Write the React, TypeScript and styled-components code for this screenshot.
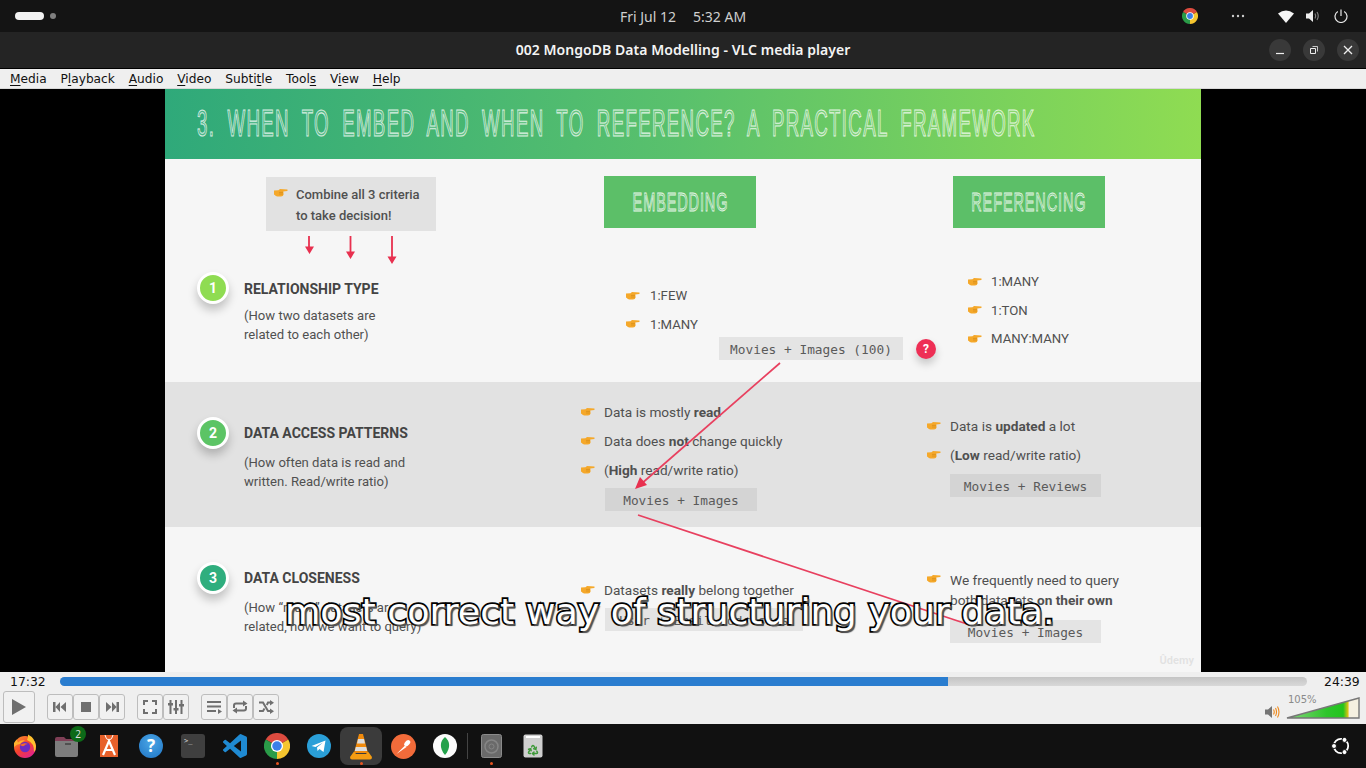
import React from "react";
import styled, { createGlobalStyle } from "styled-components";
import { Recycle } from "lucide-react";

const Global = createGlobalStyle`
  html, body { margin: 0; padding: 0; background: #000; }
  body { width: 1366px; height: 768px; overflow: hidden; font-family: "Liberation Sans", sans-serif; }
`;
const Desktop = styled.div`width:1366px;height:768px;display:flex;flex-direction:column;overflow:hidden;`;

/* Top bar */
const TopBar = styled.header`height:32px;background:#141414;display:flex;align-items:center;position:relative;padding:0 0 0 15px;box-sizing:border-box;flex:none;`;
const WorkspacePill = styled.span`width:29px;height:8px;border-radius:4px;background:#f2f2f2;`;
const WorkspaceDot = styled.span`width:6px;height:6px;border-radius:50%;background:#808080;margin-left:6px;`;
const Clock = styled.div`position:absolute;left:620px;top:0;height:32px;display:flex;align-items:center;gap:17px;color:#cfcfcf;font:14px "Noto Sans",sans-serif;`;
const Tray = styled.div`margin-left:auto;display:flex;align-items:center;height:32px;`;
const TraySlot = styled.span<{ $w: number }>`width:${p => p.$w}px;display:flex;justify-content:center;align-items:center;`;

/* Title bar */
const TitleBar = styled.div`height:36px;background:#242424;border-bottom:1px solid #000;display:flex;align-items:center;justify-content:flex-end;padding-right:7px;gap:12px;position:relative;flex:none;`;
const WindowTitle = styled.div`position:absolute;left:0;right:0;top:0;height:36px;text-align:center;color:#f4f4f4;font:600 14px/36px "Noto Sans",sans-serif;letter-spacing:.05px;`;
const WindowBtn = styled.button`width:22px;height:22px;border-radius:50%;border:0;background:#393939;padding:0;display:flex;align-items:center;justify-content:center;`;

/* Menu */
const MenuBar = styled.nav`height:20px;background:#efefef;border-bottom:1px solid #d8d8d8;box-sizing:border-box;display:flex;align-items:center;padding-left:10px;gap:13.85px;font:12.2px "DejaVu Sans",sans-serif;color:#111;flex:none;`;
const MenuItem = styled.span`white-space:nowrap;u{text-underline-offset:2px;}`;

/* Video */
const VideoArea = styled.main`height:583px;background:#000;display:flex;justify-content:center;flex:none;position:relative;`;
const Slide = styled.div`width:1036px;height:583px;position:relative;background:#f6f6f6;display:flex;flex-direction:column;overflow:hidden;color:#505050;font:13.1px/20px Roboto,sans-serif;`;
const SlideHeader = styled.div`height:70px;background:linear-gradient(90deg,#2fa97a 0%,#5ac16c 50%,#8fdc52 100%);display:flex;align-items:center;padding-left:32px;flex:none;`;
const SlideTitle = styled.h1`margin:0;font:400 36px "Liberation Sans Narrow","Liberation Sans",sans-serif;color:rgba(255,255,255,.12);-webkit-text-stroke:1.1px rgba(255,255,255,.8);white-space:nowrap;transform:scaleX(.52);transform-origin:left center;letter-spacing:2.5px;word-spacing:11px;`;
const Section = styled.section<{ $h: number; $alt?: boolean }>`height:${p => p.$h}px;background:${p => (p.$alt ? "#e2e2e2" : "#f6f6f6")};display:grid;grid-template-columns:415px 345px 276px;flex:none;`;
const Col = styled.div<{ $top?: number }>`padding-top:${p => p.$top ?? 0}px;display:flex;flex-direction:column;align-items:flex-start;min-width:0;`;
const Callout = styled.div`margin:18px 0 0 101px;width:170px;height:54px;background:#e2e2e2;box-sizing:border-box;padding:7px 0 0 8px;display:flex;gap:8px;font:500 13px/21px Roboto,sans-serif;`;
const CalloutHand = styled.span`margin-top:4px;line-height:0;`;
const CriteriaArrows = styled.svg`margin:5px 0 8px 140px;display:block;flex:none;`;
const Step = styled.div`display:flex;gap:15px;margin-left:32px;`;
const Badge = styled.div<{ $c: string }>`width:32px;height:32px;box-sizing:border-box;border-radius:50%;background:${p => p.$c};border:3px solid #fff;box-shadow:0 6px 10px rgba(0,0,0,.22);color:#fff;display:flex;align-items:center;justify-content:center;font:700 14px Roboto,sans-serif;flex:none;`;
const StepText = styled.div<{ $pad: number }>`padding-top:${p => p.$pad}px;`;
const StepTitle = styled.div`font:700 14px/20px Roboto,sans-serif;color:#444;`;
const StepDesc = styled.div<{ $gap: number }>`margin-top:${p => p.$gap}px;line-height:19.5px;white-space:nowrap;`;
const ColHeader = styled.div<{ $left: number }>`margin:17px 0 0 ${p => p.$left}px;width:152px;height:52px;background:#5cbf68;display:flex;align-items:center;justify-content:center;overflow:hidden;flex:none;`;
const ColHeaderText = styled.span`font:400 26px "Liberation Sans Narrow","Liberation Sans",sans-serif;color:rgba(255,255,255,.12);-webkit-text-stroke:.9px rgba(255,255,255,.85);transform:scaleX(.56);white-space:nowrap;letter-spacing:1.5px;`;
const Points = styled.ul<{ $left: number; $top?: number; $size?: number; $gap?: number }>`list-style:none;margin:${p => p.$top ?? 0}px 0 0 ${p => p.$left}px;padding:0;font-size:${p => p.$size ?? 13.65}px;--gap:${p => p.$gap ?? 9}px;`;
const Point = styled.li<{ $lh: number }>`display:flex;gap:var(--gap);line-height:${p => p.$lh}px;white-space:nowrap;`;
const PointHand = styled.span<{ $lh: number }>`flex:none;width:14px;line-height:0;margin-top:${p => (p.$lh - 9) / 2 - 1.25}px;`;
const CodeRow = styled.div<{ $left: number; $top: number }>`display:flex;align-items:center;gap:13px;margin:${p => p.$top}px 0 0 ${p => p.$left}px;`;
const CodeBox = styled.div<{ $w: number; $bg: string }>`width:${p => p.$w}px;height:23px;background:${p => p.$bg};font:12.8px/25px "DejaVu Sans Mono","Liberation Mono",monospace;color:#5a5a5a;text-align:center;white-space:nowrap;`;
const Question = styled.div`width:20px;height:20px;border-radius:50%;background:#ee2f55;color:#fff;font:700 12px/20px Roboto,sans-serif;text-align:center;box-shadow:0 5px 8px rgba(0,0,0,.2);`;
const Annotation = styled.svg`position:absolute;left:0;top:0;pointer-events:none;`;
const Watermark = styled.div`position:absolute;right:7px;bottom:5px;color:#e2e2e2;font:700 11px Roboto,sans-serif;text-shadow:0 0 1px #fff;`;
const Subtitle = styled.div`position:absolute;left:285px;top:503px;color:#fff;font:36.3px/40px "DejaVu Sans",sans-serif;-webkit-text-stroke:3.5px #000;paint-order:stroke fill;text-shadow:2px 2px 1px #555;white-space:nowrap;`;

/* Controls */
const Controls = styled.div`height:52px;background:#efefef;flex:none;display:flex;flex-direction:column;`;
const SeekRow = styled.div`height:18px;display:flex;align-items:center;font:12.4px "DejaVu Sans",sans-serif;color:#111;`;
const TimeText = styled.span<{ $w: number; $pad: number }>`width:${p => p.$w}px;padding-left:${p => p.$pad}px;box-sizing:border-box;flex:none;`;
const SeekTrack = styled.div`width:1247px;height:9px;border-radius:5px;background:linear-gradient(#c4c4c4,#d8d8d8);overflow:hidden;`;
const SeekFill = styled.div`height:100%;background:#2a7dcf;`;
const ButtonRow = styled.div`height:34px;display:flex;align-items:center;padding-left:3px;position:relative;`;
const PlayBtn = styled.button`width:32px;height:32px;box-sizing:border-box;border:1px solid #bdbdbd;border-radius:3px;background:#f1f1f1;padding:0;display:flex;align-items:center;justify-content:center;margin-right:12px;`;
const Ctl = styled.button<{ $end?: boolean }>`width:26px;height:26px;box-sizing:border-box;border:1px solid #bdbdbd;border-radius:3px;background:#f1f1f1;padding:0;display:flex;align-items:center;justify-content:center;margin-right:${p => (p.$end ? 12 : 0)}px;`;
const VolumeWrap = styled.div`margin-left:auto;margin-right:6px;display:flex;align-items:flex-end;gap:6px;position:relative;height:24px;`;
const VolumeLabel = styled.span`position:absolute;left:23px;top:-1px;font:10px "DejaVu Sans",sans-serif;color:#8a8a8a;`;

/* Dock */
const Dock = styled.footer`height:44px;background:#111;display:flex;align-items:center;padding-left:4px;flex:none;`;
const DockItem = styled.div<{ $active?: boolean; $running?: boolean }>`width:42px;height:38px;box-sizing:border-box;border-radius:8px;display:flex;align-items:center;justify-content:center;position:relative;background:${p => (p.$active ? "#3b3b3b" : "transparent")};
  ${p => p.$running ? `&::after{content:"";position:absolute;bottom:0;left:50%;width:3px;height:3px;margin-left:-1.5px;border-radius:50%;background:#e95420;}` : ""}`;
const DockSep = styled.span`width:1px;height:26px;background:#444;margin:0 2px 0 1px;`;
const Count = styled.span`position:absolute;right:2px;top:-1px;width:16px;height:16px;border-radius:50%;background:#0d6a18;color:#ddd;font:10px/16px "Noto Sans",sans-serif;text-align:center;`;
const HelpDisc = styled.div`width:24px;height:24px;border-radius:50%;background:radial-gradient(circle at 50% 35%,#4aa6e6,#1f74c4);color:#fff;font:700 17px/24px "Noto Sans",sans-serif;text-align:center;`;
const TermPrompt = styled.div`width:24px;height:24px;border-radius:3px;background:#3f3f3f;color:#ddd;font:7px/10px "DejaVu Sans Mono",monospace;padding:2px 0 0 3px;box-sizing:border-box;`;
const DockEnd = styled.div`margin-left:auto;width:50px;display:flex;justify-content:center;`;
const TrashMark = styled.span`position:absolute;left:15px;top:17px;line-height:0;`;

const Hand = () => (
  <svg width="14" height="9" viewBox="0 0 14 9"><path d="M0 2.6 4.5 2.2 6 .9 13.4 1.6Q14 2.4 13.2 2.9L9.3 3.4 9.6 6.6Q9.2 8.6 7 8.6H3.4Q1.6 8.6 .6 6.8H0Z" fill="#f5a82a" /><path d="M5 4.4H9M5 6H9" stroke="#d08614" strokeWidth=".6" /></svg>
);
const P: React.FC<{ lh?: number; children: React.ReactNode }> = ({ lh = 28.5, children }) => (
  <Point $lh={lh}><PointHand $lh={lh}><Hand /></PointHand><span>{children}</span></Point>
);

const Chrome: React.FC<{ s: number }> = ({ s }) => (
  <svg width={s} height={s} viewBox="0 0 24 24">
    <path d="M12 12 22.4 6A12 12 0 0 0 1.6 6Z" fill="#dd4b3f" />
    <path d="M12 12 1.6 6A12 12 0 0 0 12 24Z" fill="#2a9b48" />
    <path d="M12 12 12 24A12 12 0 0 0 22.4 6Z" fill="#f5c52e" />
    <circle cx="12" cy="12" r="5.6" fill="#fff" /><circle cx="12" cy="12" r="4.4" fill="#3b7fe8" />
  </svg>
);
const G = "#6f6f6f";
const I: React.FC<{ children: React.ReactNode; w?: number }> = ({ children, w = 18 }) => (
  <svg width={w} height="18" viewBox="0 0 18 18" fill={G} stroke="none">{children}</svg>
);

export default function App() {
  return (
    <Desktop>
      <Global />
      <TopBar>
        <WorkspacePill /><WorkspaceDot />
        <Clock><span>Fri Jul 12</span><span>5:32 AM</span></Clock>
        <Tray>
          <TraySlot $w={32}><Chrome s={16} /></TraySlot>
          <TraySlot $w={64}><svg width="14" height="4"><circle cx="2" cy="2" r="1.2" fill="#ccc" /><circle cx="7" cy="2" r="1.2" fill="#ccc" /><circle cx="12" cy="2" r="1.2" fill="#ccc" /></svg></TraySlot>
          <TraySlot $w={32}><svg width="16" height="13" viewBox="0 0 16 13"><path d="M0 3.5Q8-2.5 16 3.5L8 13Z" fill="#f4f4f4" /></svg></TraySlot>
          <TraySlot $w={22}><svg width="15" height="14" viewBox="0 0 15 14"><path d="M0 4.5H3L7 1V13L3 9.5H0Z" fill="#eee" /><path d="M9 4.5Q10.5 7 9 9.5M11 3Q13.5 7 11 11" stroke="#888" strokeWidth="1.1" fill="none" /></svg></TraySlot>
          <TraySlot $w={34}><svg width="14" height="14" viewBox="0 0 14 14" fill="none" stroke="#e8e8e8" strokeWidth="1.2"><path d="M7 .5V7" /><path d="M3.8 2.4A6 6 0 1 0 10.2 2.4" /></svg></TraySlot>
          <TraySlot $w={8} />
        </Tray>
      </TopBar>

      <TitleBar>
        <WindowTitle>002 MongoDB Data Modelling - VLC media player</WindowTitle>
        <WindowBtn><svg width="10" height="10"><path d="M1 8.5H9" stroke="#eee" strokeWidth="1.2" /></svg></WindowBtn>
        <WindowBtn><svg width="10" height="10" fill="none" stroke="#eee"><path d="M1.5 3.5H6.5V8.5H1.5Z" /><path d="M3.5 1.5H8.5V6.5" strokeWidth=".8" /></svg></WindowBtn>
        <WindowBtn><svg width="10" height="10" stroke="#eee" strokeWidth="1.3"><path d="M1 1 9 9M9 1 1 9" /></svg></WindowBtn>
      </TitleBar>

      <MenuBar>
        <MenuItem><u>M</u>edia</MenuItem>
        <MenuItem>P<u>l</u>ayback</MenuItem>
        <MenuItem><u>A</u>udio</MenuItem>
        <MenuItem><u>V</u>ideo</MenuItem>
        <MenuItem>Subti<u>t</u>le</MenuItem>
        <MenuItem>Tool<u>s</u></MenuItem>
        <MenuItem>V<u>i</u>ew</MenuItem>
        <MenuItem><u>H</u>elp</MenuItem>
      </MenuBar>

      <VideoArea>
        <Slide>
          <SlideHeader><SlideTitle>3. WHEN TO EMBED AND WHEN TO REFERENCE? A PRACTICAL FRAMEWORK</SlideTitle></SlideHeader>

          <Section $h={223}>
            <Col>
              <Callout><CalloutHand><Hand /></CalloutHand><span>Combine all 3 criteria<br />to take decision!</span></Callout>
              <CriteriaArrows width="92" height="28" viewBox="0 0 92 28">
                <g stroke="#e8304f" strokeWidth="1.8" fill="#e8304f">
                  <path d="M4 0V14" /><path d="M45.500 0V19" /><path d="M87 0V24" />
                  <path stroke="none" d="M0 10.500H9L4.500 18ZM41 15.500H50L45.500 23ZM82.500 20.500H91.500L87 28Z" />
                </g>
              </CriteriaArrows>
              <Step>
                <Badge $c="#8fdc52">1</Badge>
                <StepText $pad={7}>
                  <StepTitle>RELATIONSHIP TYPE</StepTitle>
                  <StepDesc $gap={6.5}>(How two datasets are<br />related to each other)</StepDesc>
                </StepText>
              </Step>
            </Col>
            <Col>
              <ColHeader $left={24}><ColHeaderText>EMBEDDING</ColHeaderText></ColHeader>
              <Points $left={46} $top={54} $size={13.2} $gap={10}><P>1:FEW</P><P>1:MANY</P></Points>
              <CodeRow $left={139} $top={-2}>
                <CodeBox $w={184} $bg="#e4e4e4">Movies + Images (100)</CodeBox>
                <Question>?</Question>
              </CodeRow>
            </Col>
            <Col>
              <ColHeader $left={28}><ColHeaderText>REFERENCING</ColHeaderText></ColHeader>
              <Points $left={43} $top={40} $size={13.2}><P>1:MANY</P><P>1:TON</P><P>MANY:MANY</P></Points>
            </Col>
          </Section>

          <Section $h={145} $alt>
            <Col $top={35}>
              <Step>
                <Badge $c="#5cc465">2</Badge>
                <StepText $pad={6}>
                  <StepTitle>DATA ACCESS PATTERNS</StepTitle>
                  <StepDesc $gap={9.5}>(How often data is read and<br />written. Read/write ratio)</StepDesc>
                </StepText>
              </Step>
            </Col>
            <Col $top={16}>
              <Points $left={1}>
                <P lh={29}>Data is mostly <b>read</b></P>
                <P lh={29}>Data does <b>not</b> change quickly</P>
                <P lh={29}>(<b>High</b> read/write ratio)</P>
              </Points>
              <CodeRow $left={25} $top={3}><CodeBox $w={152} $bg="#d4d4d4">Movies + Images</CodeBox></CodeRow>
            </Col>
            <Col $top={30}>
              <Points $left={2}>
                <P lh={29}>Data is <b>updated</b> a lot</P>
                <P lh={29}>(<b>Low</b> read/write ratio)</P>
              </Points>
              <CodeRow $left={25} $top={4}><CodeBox $w={151} $bg="#d4d4d4">Movies + Reviews</CodeBox></CodeRow>
            </Col>
          </Section>

          <Section $h={145}>
            <Col $top={35}>
              <Step>
                <Badge $c="#2fae7e">3</Badge>
                <StepText $pad={6}>
                  <StepTitle>DATA CLOSENESS</StepTitle>
                  <StepDesc $gap={9.5}>(How “much” datasets are<br />related, how we want to query)</StepDesc>
                </StepText>
              </Step>
            </Col>
            <Col $top={49}>
              <Points $left={1}><P>Datasets <b>really</b> belong together</P></Points>
              <CodeRow $left={25} $top={3.5}><CodeBox $w={198} $bg="#e4e4e4">User + Email addresses</CodeBox></CodeRow>
            </Col>
            <Col $top={43}>
              <Points $left={2}><P lh={20}>We frequently need to query<br />both datasets <b>on their own</b></P></Points>
              <CodeRow $left={25} $top={10}><CodeBox $w={151} $bg="#e4e4e4">Movies + Images</CodeBox></CodeRow>
            </Col>
          </Section>

          <Annotation width="1036" height="583" viewBox="0 0 1036 583">
            <path d="M615 274 475 396" stroke="#e8405f" strokeWidth="1.7" fill="none" />
            <path d="M470 400 482 396 475 388Z" fill="#e8304f" />
            <path d="M473 426 805 536" stroke="#e8405f" strokeWidth="1.7" fill="none" />
          </Annotation>
          <Watermark>Ûdemy</Watermark>
        </Slide>
        <Subtitle>most correct way of structuring your data.</Subtitle>
      </VideoArea>

      <Controls>
        <SeekRow>
          <TimeText $w={60} $pad={10}>17:32</TimeText>
          <SeekTrack><SeekFill style={{ width: `${(888 / 1247) * 100}%` }} /></SeekTrack>
          <TimeText $w={59} $pad={17}>24:39</TimeText>
        </SeekRow>
        <ButtonRow>
          <PlayBtn><svg width="18" height="20"><path d="M2 2 16 10 2 18Z" fill={G} /></svg></PlayBtn>
          <Ctl><I><path d="M2 4H4.5V14H2ZM9 4V14L4.5 9ZM15 4V14L9.5 9Z" /></I></Ctl>
          <Ctl><I><path d="M4 4H14V14H4Z" /></I></Ctl>
          <Ctl $end><I><path d="M13.5 4H16V14H13.5ZM9 4V14L13.5 9ZM3 4V14L8.5 9Z" /></I></Ctl>
          <Ctl><I><path d="M2 2H7V4H4V7H2ZM11 2H16V7H14V4H11ZM2 11H4V14H7V16H2ZM14 11H16V16H11V14H14Z" /></I></Ctl>
          <Ctl $end><I><path d="M2.5 2H4.5V5H6V7.5H4.5V16H2.5V7.5H1V5H2.5ZM8 2H10V10H11.5V12.5H10V16H8V12.5H6.5V10H8ZM13.5 2H15.5V6H17V8.5H15.5V16H13.5V8.5H12V6H13.5Z" /></I></Ctl>
          <Ctl><I><path d="M2 3H16V5H2ZM2 7.5H16V9.5H2ZM2 12H11V14H2ZM13 11 17 13.5 13 16Z" /></I></Ctl>
          <Ctl><svg width="18" height="18" viewBox="0 0 18 18" fill="none" stroke={G} strokeWidth="2"><path d="M3 10V7.5Q3 5.5 5 5.5H13" /><path d="M15 8V10.5Q15 12.5 13 12.5H5" /><path fill={G} stroke="none" d="M12 2.5 16.5 5.5 12 8.5ZM6 9.5 1.5 12.5 6 15.5Z" /></svg></Ctl>
          <Ctl><svg width="18" height="18" viewBox="0 0 18 18" fill="none" stroke={G} strokeWidth="2"><path d="M2 4.5H6L11 13H14" /><path d="M2 13H6L7.5 10.5M9.8 7 11 4.5H14" /><path fill={G} stroke="none" d="M13 2V7.5L17 4.7ZM13 10.5V16L17 13.2Z" /></svg></Ctl>
          <VolumeWrap>
            <svg width="15" height="14" viewBox="0 0 15 14"><path d="M0 4.5H3L7 1V13L3 9.5H0Z" fill="#757575" /><path d="M8.5 4.5Q10 7 8.5 9.5M10.5 3Q12.5 7 10.5 11M12.5 1.5Q15.5 7 12.5 12.5" stroke="#f08a1c" strokeWidth="1.1" fill="none" /></svg>
            <svg width="74" height="22" viewBox="0 0 74 22">
              <defs><linearGradient id="vol"><stop offset="0" stopColor="#86d77c" /><stop offset=".55" stopColor="#2ec52c" /><stop offset=".78" stopColor="#22c41c" /><stop offset=".85" stopColor="#e2c414" /><stop offset=".86" stopColor="#f5f0e0" /></linearGradient></defs>
              <path d="M1 21 73 1V21Z" fill="url(#vol)" stroke="#777" strokeWidth="1.4" />
            </svg>
            <VolumeLabel>105%</VolumeLabel>
          </VolumeWrap>
        </ButtonRow>
      </Controls>

      <Dock>
        <DockItem>
          <svg width="24" height="24" viewBox="0 0 24 24">
            <defs><linearGradient id="ff" x1="0" y1="0" x2=".7" y2="1"><stop offset="0" stopColor="#ff9a2c" /><stop offset=".55" stopColor="#f5412e" /><stop offset="1" stopColor="#e0228f" /></linearGradient></defs>
            <circle cx="12" cy="13" r="11" fill="url(#ff)" />
            <path d="M15 .5Q22 4 23 12 23 16 21 18 21.500 9 14 6 15.500 3.500 15 .5Z" fill="#ffc12e" />
            <path d="M1 9 3.500 5.500 5 8.500Q8 5.500 12 6.500 8 8 7 10 4 10 1 13Z" fill="#ffb02e" />
            <circle cx="12" cy="13" r="5.200" fill="#6b2bc2" />
            <path d="M7 11Q11 8 15 10 12 10 11 12 8.500 12.500 7 11Z" fill="#f06a2e" />
          </svg>
        </DockItem>
        <DockItem>
          <svg width="26" height="24" viewBox="0 0 26 24"><path d="M1 5Q1 3 3 3H10L12 5H21V12H1Z" fill="#7f3f56" /><path d="M1 7H24V21Q24 23 22 23H3Q1 23 1 21Z" fill="#7d7d7d" /><path d="M11 10H17" stroke="#333" strokeWidth="1.200" /></svg>
          <Count>2</Count>
        </DockItem>
        <DockItem>
          <svg width="20" height="24" viewBox="0 0 20 24"><path d="M1 1H19V23H1Z" fill="#e7602a" /><path d="M6 1Q7 6 10 6T14 1" stroke="#fff" strokeWidth="1" fill="none" /><path d="M4 21 10 7 16 21M6.500 16H13.500" stroke="#fff" strokeWidth="2.200" fill="none" /></svg>
        </DockItem>
        <DockItem><HelpDisc>?</HelpDisc></DockItem>
        <DockItem><TermPrompt>&gt;_</TermPrompt></DockItem>
        <DockItem>
          <svg width="24" height="24" viewBox="0 0 24 24"><path fill="#1f8ad2" d="M23.15 2.587L18.21.21a1.494 1.494 0 0 0-1.705.29l-9.46 8.63-4.12-3.128a.999.999 0 0 0-1.276.057L.327 7.261A1 1 0 0 0 .326 8.74L3.899 12 .326 15.26a1 1 0 0 0 .001 1.479L1.65 17.94a.999.999 0 0 0 1.276.057l4.12-3.128 9.46 8.63a1.492 1.492 0 0 0 1.704.29l4.942-2.377A1.5 1.5 0 0 0 24 20.06V3.939a1.5 1.5 0 0 0-.85-1.352zm-5.146 14.861L10.826 12l7.178-5.448v10.896z" /></svg>
        </DockItem>
        <DockItem $running><Chrome s={26} /></DockItem>
        <DockItem>
          <svg width="24" height="24" viewBox="0 0 24 24"><circle cx="12" cy="12" r="12" fill="#2a9fd8" /><path d="M4.500 12 18.500 6.500 16.500 18 12.500 15 10.500 17 10 13.500 16 8.500 8.500 13Z" fill="#fff" /></svg>
        </DockItem>
        <DockItem $active $running>
          <svg width="24" height="27" viewBox="0 0 24 27"><path d="M10 1H14L19 20H5Z" fill="#f08a0c" /><path d="M9 6H15L16 10.500H8ZM6.800 14H17.200L18.200 18H5.800Z" fill="#ddd" /><path d="M5 18.500 1 24Q1 26.500 3 26.500H21Q23 26.500 23 24L19 18.500 17 21H7Z" fill="#f59c12" /></svg>
        </DockItem>
        <DockItem>
          <svg width="25" height="25" viewBox="0 0 25 25"><circle cx="12.500" cy="12.500" r="12.500" fill="#f26b3a" /><path d="M5.500 20 14 11.500 15.500 13Z" fill="#fff" /><path d="M13.500 9Q16 5 18.500 6.500T16.500 12L15 12.500 13 11Z" fill="#fff" /></svg>
        </DockItem>
        <DockItem>
          <svg width="24" height="24" viewBox="0 0 24 24"><circle cx="12" cy="12" r="12" fill="#fbfbfb" /><path d="M12 3C17 7 18 14 12 21 6 14 7 7 12 3Z" fill="#23a14a" /></svg>
        </DockItem>
        <DockSep />
        <DockItem $running>
          <svg width="21" height="24" viewBox="0 0 21 24"><rect x=".5" y=".5" width="20" height="23" rx="2" fill="#6a6a6a" stroke="#8a8a8a" /><circle cx="10.500" cy="12.500" r="6.500" fill="none" stroke="#858585" strokeWidth="1.500" /><circle cx="10.500" cy="12.500" r="2.500" fill="none" stroke="#858585" /></svg>
        </DockItem>
        <DockItem>
          <svg width="20" height="24" viewBox="0 0 20 24"><rect x=".5" y=".5" width="19" height="23" rx="2" fill="#cfcfcf" /><rect x="3" y="2" width="14" height="2" fill="#fff" /></svg>
          <TrashMark><Recycle size={12} color="#3f9a3a" strokeWidth={3} /></TrashMark>
        </DockItem>
        <DockEnd>
          <svg width="20" height="20" viewBox="0 0 20 20"><circle cx="10" cy="10" r="7.200" fill="none" stroke="#fff" strokeWidth="1.800" /><circle cx="3" cy="10" r="2.500" fill="#fff" stroke="#111" /><circle cx="13.500" cy="3.900" r="2.500" fill="#fff" stroke="#111" /><circle cx="13.500" cy="16.100" r="2.500" fill="#fff" stroke="#111" /></svg>
        </DockEnd>
      </Dock>
    </Desktop>
  );
}
